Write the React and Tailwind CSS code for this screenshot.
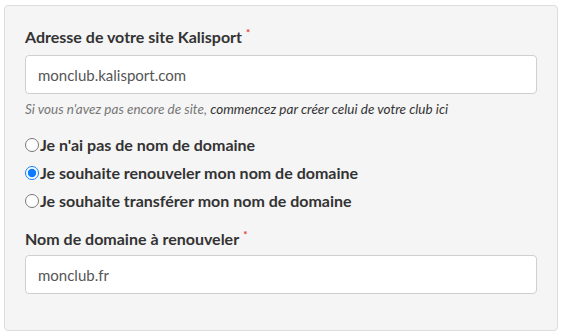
import { useState } from "react";

const options = [
  { id: "none", label: "Je n'ai pas de nom de domaine" },
  { id: "renew", label: "Je souhaite renouveler mon nom de domaine" },
  { id: "transfer", label: "Je souhaite transférer mon nom de domaine" },
];

export default function App() {
  const [choice, setChoice] = useState("renew");

  return (
    <div className="min-h-screen bg-white pl-[4px] pt-[5px] pr-[6px] pb-[5px] font-['Lato','Liberation_Sans',sans-serif] text-[#333]">
      <div className="border border-[#dcdcdc] rounded-[4px] bg-[#f5f5f5] px-[20px] pt-[20px] pb-[36px] h-[326px]">
        {/* Site address */}
        <label className="flex text-[16px] font-bold leading-[22px]">
          Adresse de votre site Kalisport
          <span className="text-[#e3342f] text-[10px] leading-[10px] ml-[4px] mt-[1px]">*</span>
        </label>
        <input
          type="text"
          defaultValue="monclub.kalisport.com"
          className="mt-[7px] w-full h-[39px] bg-white border border-[#cfcfcf] rounded-[4px] px-[12px] text-[15px] text-[#555] outline-none"
        />
        <p className="mt-[6px] text-[13.5px] italic leading-[18px] text-[#777]">
          Si vous n'avez pas encore de site,{" "}
          <a href="#" className="text-[#333]">commencez par créer celui de votre club ici</a>
        </p>

        {/* Domain options */}
        <div className="mt-[16px] flex flex-col gap-[6px]">
          {options.map((opt) => (
            <label key={opt.id} className="flex items-center gap-[1px] text-[16px] font-bold leading-[22px] cursor-pointer">
              <input
                type="radio"
                name="domain"
                checked={choice === opt.id}
                onChange={() => setChoice(opt.id)}
                className="m-0 w-[14px] h-[14px] accent-[#0a7cff]"
              />
              {opt.label}
            </label>
          ))}
        </div>

        {/* Domain to renew */}
        <label className="mt-[16px] flex text-[16px] font-bold leading-[22px]">
          Nom de domaine à renouveler
          <span className="text-[#e3342f] text-[10px] leading-[10px] ml-[4px] mt-[1px]">*</span>
        </label>
        <input
          type="text"
          defaultValue="monclub.fr"
          className="mt-[5px] w-full h-[39px] bg-white border border-[#cfcfcf] rounded-[4px] px-[12px] text-[15px] text-[#555] outline-none"
        />
      </div>
    </div>
  );
}
